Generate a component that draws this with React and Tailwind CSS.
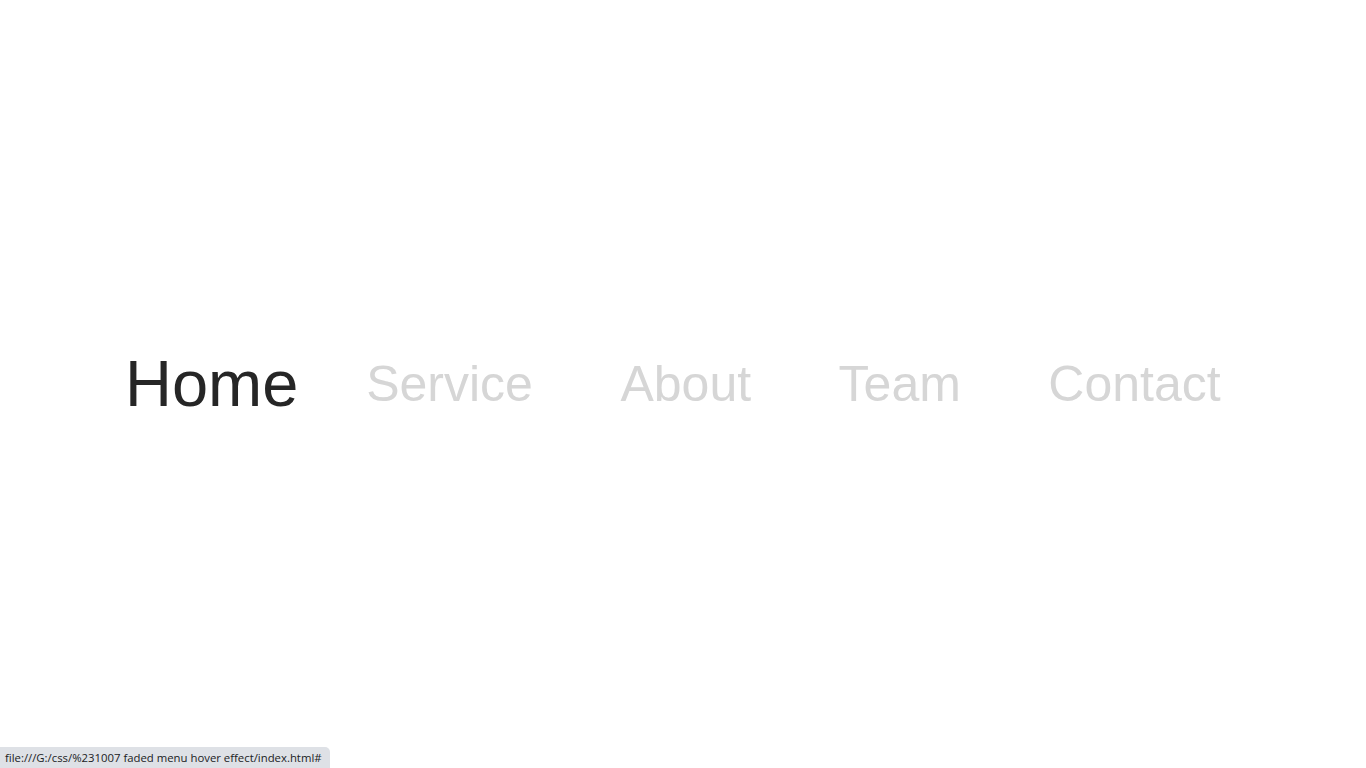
import React, { useState } from 'react';

const items = ['Home', 'Service', 'About', 'Team', 'Contact'];

const App = () => {
  const [active, setActive] = useState('Home');

  return (
    <div className="relative h-screen w-full bg-white font-['Liberation_Sans',Arial,sans-serif]">
      {/* Menu */}
      <div className="flex h-full items-center justify-center">
        <ul className="flex items-center">
          {items.map((item) => (
            <li key={item} className="px-[43.75px]">
              <a
                href="#"
                onMouseEnter={() => setActive(item)}
                className={`block text-[50px] leading-[57px] transition-all duration-300 ${
                  active === item ? 'scale-[1.3] text-[#262626]' : 'text-[#d6d6d6]'
                }`}
              >
                {item}
              </a>
            </li>
          ))}
        </ul>
      </div>

      {/* Status bar */}
      <div className="absolute bottom-0 left-0 h-[21px] w-[330px] rounded-tr-[5px] bg-[#dee1e6] pl-[5px] pt-[2px] font-['Open_Sans',sans-serif] text-[11.35px] leading-[17px] text-[#202124] whitespace-nowrap">
        file:///G:/css/%231007 faded menu hover effect/index.html#
      </div>
    </div>
  );
};

export default App;
